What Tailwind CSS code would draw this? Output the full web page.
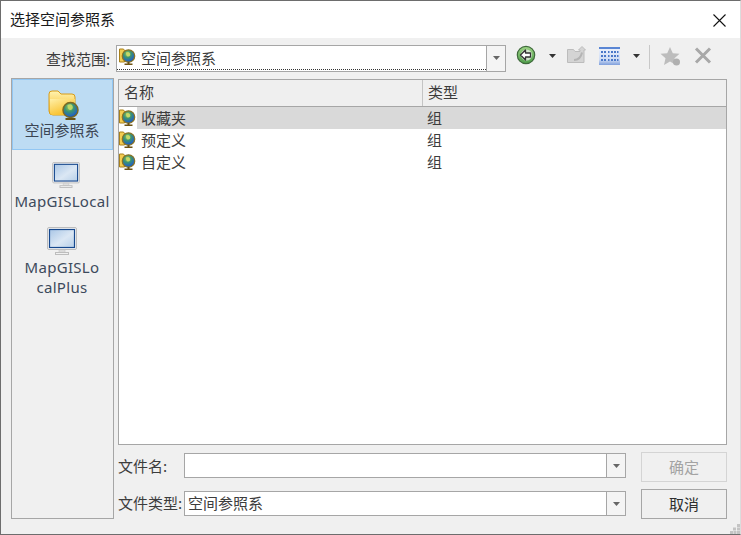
<!DOCTYPE html>
<html lang="zh">
<head>
<meta charset="utf-8">
<script src="https://cdn.jsdelivr.net/npm/@tailwindcss/browser@4"></script>
</head>
<body class="m-0 bg-white overflow-hidden">
<svg width="0" height="0" class="absolute">
  <defs>
    <linearGradient id="fold" x1="0" y1="0" x2="0" y2="1"><stop offset="0" stop-color="#fff3b0"/><stop offset="1" stop-color="#f6b414"/></linearGradient>
    <linearGradient id="foldf" x1="0" y1="0" x2="0.6" y2="1"><stop offset="0" stop-color="#fff0a8"/><stop offset="1" stop-color="#f8bc20"/></linearGradient>
    <radialGradient id="globe" cx="0.42" cy="0.32" r="0.75"><stop offset="0" stop-color="#a6cc58"/><stop offset="0.4" stop-color="#3c9470"/><stop offset="0.75" stop-color="#2468bc"/><stop offset="1" stop-color="#16408c"/></radialGradient>
    <linearGradient id="scr" x1="0" y1="0" x2="1" y2="1"><stop offset="0" stop-color="#a9c6e6"/><stop offset="0.55" stop-color="#dbe7f4"/><stop offset="1" stop-color="#b6cfe8"/></linearGradient>
    <linearGradient id="tbl" x1="0" y1="0" x2="0" y2="1"><stop offset="0" stop-color="#eef3fc"/><stop offset="0.7" stop-color="#cfdcf4"/><stop offset="1" stop-color="#7f9fdc"/></linearGradient>
    <symbol id="smallglobe" viewBox="0 0 18 18">
      <path d="M0.500 1h4l1 1.500v11.500h-5z" fill="#f4cc50" stroke="#a8801c" stroke-width="1"/>
      <circle cx="9.500" cy="8" r="6.200" fill="url(#globe)" stroke="#8a7424" stroke-width="1.300"/>
      <path d="M7 4.500q3-1.500 4 1t-2 3q-2 0-2-4z" fill="#c4d868"/>
      <path d="M5.500 15.500h8v1.500h-8z M8.500 14h2v2h-2z" fill="#6e5212"/>
    </symbol>
    <symbol id="monitor" viewBox="0 0 30 28">
      <rect x="0.500" y="0.500" width="29" height="22" rx="1.500" fill="#f4f4f4" stroke="#bdbdbd"/>
      <rect x="2.500" y="2.500" width="25" height="18" fill="url(#scr)" stroke="#16488e" stroke-width="1.200"/>
      <path d="M12 23h6v2h-6z" fill="#e4e4e4" stroke="#c4c4c4" stroke-width=".6"/>
      <rect x="8.500" y="25.500" width="13" height="2" fill="#f0f0f0" stroke="#bdbdbd"/>
    </symbol>
  </defs>
</svg>

<div class="relative w-[741px] h-[535px] flex flex-col border-t border-b border-l border-r border-t-[#6d6d6d] border-b-[#6d6d6d] border-l-[#6d6d6d] border-r-[#dcdcdc] bg-[#f0f0f0] text-[15px] leading-[22px] text-[#3c3c3c] font-['Noto_Sans_CJK_SC','Noto_Sans',sans-serif]">

  <!-- Title bar -->
  <div class="h-[37px] shrink-0 bg-white flex items-center justify-between pl-[9px] pr-[14px] text-[#1a1a1a]">
    <span class="-mt-[1px]">选择空间参照系</span>
    <svg width="13" height="13" viewBox="0 0 13 13" class="mt-[1px]"><path d="M0.500 0.500l12 12M12.500 0.500l-12 12" stroke="#111" stroke-width="1.100" fill="none"/></svg>
  </div>

  <!-- Toolbar -->
  <div class="h-[40px] shrink-0 flex items-center pl-[45px]">
    <span class="w-[70px] pt-[2px]">查找范围:</span>
    <div class="w-[390px] h-[27px] flex bg-white border border-[#a6a6a6]">
      <div class="flex-1 relative flex items-center pl-[2px] border-b border-dotted border-[#333] mb-[1px]">
        <svg width="18" height="18" class="mr-[4px]"><use href="#smallglobe"/></svg>
        <span class="pt-[1px]">空间参照系</span>
      </div>
      <div class="w-[19px] border-l border-[#a6a6a6] bg-[#f4f4f4] flex items-center justify-center">
        <svg width="7" height="4"><path d="M0 0h7l-3.500 4z" fill="#666"/></svg>
      </div>
    </div>
    <svg width="20" height="20" viewBox="0 0 20 20" class="ml-[10px] -mt-[6px]">
      <defs><linearGradient id="gr" x1="0" y1="0" x2="0" y2="1"><stop offset="0" stop-color="#9ed486"/><stop offset="1" stop-color="#4f9e4a"/></linearGradient></defs>
      <circle cx="10" cy="10" r="8.700" fill="url(#gr)" stroke="#3f6a3c" stroke-width="1.200"/>
      <circle cx="10.500" cy="10" r="5.500" fill="#e8efe6" opacity=".8"/>
      <path d="M4.500 10l5-5v3h5v4h-5v3z" fill="#fff" stroke="#333" stroke-width="1.300" stroke-linejoin="round"/>
    </svg>
    <svg width="7" height="4" class="ml-[13px] -mt-[5px]"><path d="M0 0h7l-3.500 4z" fill="#333"/></svg>
    <svg width="20" height="18" viewBox="0 0 20 18" class="ml-[11px] -mt-[6px] blur-[0.4px]">
      <path d="M0.500 3.500h6l1.500 2h5V4h-1.500L15 0.500 18.500 4H17v12.500H0.500z" fill="#d4d4d4" stroke="#bcbcbc"/>
      <path d="M7 14q6.500 0 8-7.500" stroke="#b4b4b4" stroke-width="2" fill="none"/>
    </svg>
    <svg width="21" height="18" viewBox="0 0 21 18" class="ml-[12px] -mt-[5px]">
      <rect width="21" height="18" fill="url(#tbl)"/>
      <rect width="21" height="2" fill="#5a86d4"/>
      <path d="M2 4h2v2H2zM5 4h2v2H5zM9 4h1.500v2H9zM12 4h2v2h-2zM15 4h2v2h-2zM18 4h1.500v2H18zM2 8h2v2H2zM5 8h2v2H5zM9 8h1.500v2H9zM12 8h2v2h-2zM15 8h2v2h-2zM18 8h1.500v2H18zM2 12h2v2H2zM5 12h2v2H5zM9 12h1.500v2H9zM12 12h2v2h-2zM15 12h2v2h-2zM18 12h1.500v2H18z" fill="#4a78c8"/>
    </svg>
    <svg width="7" height="4" class="ml-[13px] -mt-[5px]"><path d="M0 0h7l-3.500 4z" fill="#333"/></svg>
    <div class="w-[1px] h-[24px] bg-[#c8c8c8] ml-[9px] -mt-[2px]"></div>
    <svg width="21" height="21" viewBox="0 0 21 21" class="ml-[11px] -mt-[4px] -translate-x-[1px] blur-[0.4px]">
      <path d="M10 1l2.800 6.200 6.700.6-5 4.500 1.500 6.700-6-3.500-6 3.500 1.500-6.700-5-4.500 6.700-.6z" fill="#bdbdbd"/>
      <circle cx="16.500" cy="16" r="3.500" fill="#b0b0b0"/>
    </svg>
    <svg width="18" height="17" viewBox="0 0 18 17" class="ml-[12px] -mt-[6px] blur-[0.3px]"><path d="M2 1.500l14 14M16 1.500l-14 14" stroke="#a8a8a8" stroke-width="3" fill="none"/></svg>
  </div>

  <!-- Main -->
  <div class="flex-1 flex pl-[10px] pr-[13px] pb-[15px] gap-[4px] min-h-0">
    <!-- Places -->
    <div class="w-[103px] shrink-0 border border-[#a6a6a6] bg-[#f0f0f0] text-[#3d4a5c] text-center flex flex-col">
      <div class="h-[71px] bg-[#bddcf3] border border-[#92c7f3] flex flex-col items-center pt-[10px] text-[#3c4654]">
        <svg width="32" height="30" viewBox="0 0 32 30" class="ml-[2px]">
          <path d="M1 4q0-3 3-3h6l3 3h11q3 0 3 3v16q0 2-3 2H5q-4 0-4-4z" fill="url(#fold)" stroke="#d89c18"/>
          <path d="M2 9h25v14q0 2-2 2H5q-3 0-3-3z" fill="url(#foldf)"/>
          <circle cx="22.500" cy="20" r="7.500" fill="url(#globe)" stroke="#7c6a22" stroke-width="1.500"/>
          <path d="M19.500 15q4-2 5 1t-2 4q-3 0-3-5z" fill="#bcd868"/>
          <path d="M17.500 28h10v2h-10z" fill="#6c5414"/>
        </svg>
        <span class="-mt-[1px] mr-[1px]">空间参照系</span>
      </div>
      <div class="h-[62px] flex flex-col items-center pt-[12px]">
        <svg width="30" height="28" class="ml-[7px]"><use href="#monitor"/></svg>
        <span class="mt-[2px] mr-[1px] font-['Noto_Sans'] tracking-[0.3px] whitespace-nowrap">MapGISLocal</span>
      </div>
      <div class="flex flex-col items-center pt-[15px]">
        <svg width="30" height="28" class="mr-[1px]"><use href="#monitor"/></svg>
        <span class="mt-[2px] mr-[1px] leading-[20px] font-['Noto_Sans'] tracking-[0.3px]">MapGISLo<br>calPlus</span>
      </div>
    </div>

    <!-- List + footer -->
    <div class="flex-1 flex flex-col min-w-0">
      <div class="mt-[1px] h-[366px] shrink-0 border border-[#a6a6a6] bg-white flex flex-col">
        <div class="h-[27px] shrink-0 bg-[#efefef] border-b border-[#a6a6a6] flex items-center">
          <span class="w-[304px] pl-[5px] pb-[2px] h-full flex items-center border-r border-[#c4c4c4]">名称</span>
          <span class="pl-[5px] pb-[2px]">类型</span>
        </div>
        <div class="h-[22px] flex items-center">
          <svg width="18" height="18" class="shrink-0"><use href="#smallglobe"/></svg>
          <div class="flex-1 h-full bg-[#d9d9d9] flex items-center pl-[4px]">
            <span class="w-[286px]">收藏夹</span><span>组</span>
          </div>
        </div>
        <div class="h-[22px] flex items-center">
          <svg width="18" height="18" class="shrink-0"><use href="#smallglobe"/></svg>
          <span class="w-[286px] ml-[4px]">预定义</span><span>组</span>
        </div>
        <div class="h-[22px] flex items-center">
          <svg width="18" height="18" class="shrink-0"><use href="#smallglobe"/></svg>
          <span class="w-[286px] ml-[4px]">自定义</span><span>组</span>
        </div>
      </div>

      <div class="flex mt-[7px]">
        <div class="w-[508px] shrink-0 flex flex-col gap-[13px] pt-[1px]">
          <div class="h-[25px] flex items-center">
            <span class="w-[66px] shrink-0">文件名:</span>
            <div class="flex-1 h-full flex bg-white border border-[#a6a6a6]">
              <div class="flex-1"></div>
              <div class="w-[19px] border-l border-[#a6a6a6] bg-[#f4f4f4] flex items-center justify-center"><svg width="7" height="4"><path d="M0 0h7l-3.500 4z" fill="#666"/></svg></div>
            </div>
          </div>
          <div class="h-[25px] flex items-center">
            <span class="w-[66px] shrink-0 whitespace-nowrap -mt-[1px]">文件类型:</span>
            <div class="flex-1 h-full flex bg-white border border-[#a6a6a6]">
              <div class="flex-1 pl-[3px] pb-[1px] flex items-center">空间参照系</div>
              <div class="w-[19px] border-l border-[#a6a6a6] bg-[#f4f4f4] flex items-center justify-center"><svg width="7" height="4"><path d="M0 0h7l-3.500 4z" fill="#666"/></svg></div>
            </div>
          </div>
        </div>
        <div class="ml-[15px] w-[86px] shrink-0 flex flex-col gap-[7px]">
          <div class="h-[30px] border border-[#d4d4d4] flex items-center justify-center text-[#a3a3a3]">确定</div>
          <div class="h-[30px] border border-[#a6a6a6] flex items-center justify-center text-[#2e2e2e] pb-[1px]">取消</div>
        </div>
      </div>
    </div>
  </div>

  <!-- Resize grip -->
  <svg width="10" height="10" viewBox="0 0 10 10" class="absolute right-0 bottom-0"><path d="M7 0h3v3H7zM3 3.500h3v3H3zM7 3.500h3v3H7zM0 7h3v3H0zM3.500 7h3v3h-3z M7 7h3v3H7z" fill="#c4c4c4"/></svg>
</div>
</body>
</html>
